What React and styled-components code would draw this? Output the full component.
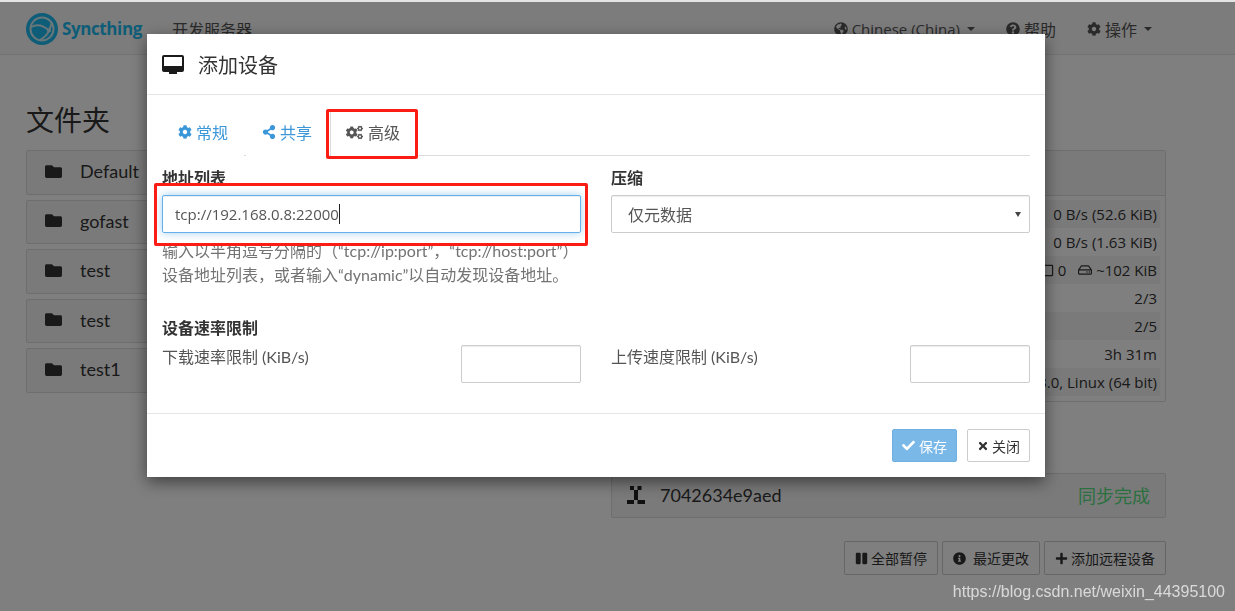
import React from 'react';
import styled, { createGlobalStyle } from 'styled-components';
import {
  FaCog,
  FaShareAlt,
  FaCogs,
  FaFolder,
  FaGlobeAmericas,
  FaQuestionCircle,
  FaCheck,
  FaTimes,
  FaPause,
  FaInfoCircle,
  FaPlus,
  FaRegHdd,
  FaRegSquare,
} from 'react-icons/fa';

const BASE_FONT = '"Open Sans", "Noto Sans CJK SC", sans-serif';
const NARROW_FONT = 'Lato, "Noto Sans CJK SC", sans-serif';

const GlobalStyle = createGlobalStyle`
  html, body {
    margin: 0;
    height: 100%;
    overflow: hidden;
    background: #fff;
    color: #333;
    font-family: ${BASE_FONT};
    font-size: 14px;
  }
  * { box-sizing: border-box; }
`;

const Navbar = styled.nav`
  align-items: center;
  background: #f8f8f8;
  border-bottom: 1px solid #e7e7e7;
  display: flex;
  height: 55px;
  padding: 3px 83px 0 26px;
`;

const Brand = styled.div`
  align-items: center;
  color: #1dbaf0;
  display: flex;
  font-family: "Open Sans", sans-serif;
  font-size: 17px;
  font-weight: 700;
  gap: 4px;
  letter-spacing: -0.4px;
  margin-right: 30px;
`;

const NavText = styled.span`
  color: #555;
  font-size: 16px;
`;

const NavRight = styled.div`
  align-items: center;
  display: flex;
  gap: 31px;
  margin-left: auto;
`;

const NavItem = styled.span`
  align-items: center;
  color: #555;
  display: flex;
  font-size: ${p => p.$size || 16}px;
  gap: 4px;
`;

const Caret = styled.span`
  border-left: 4px solid transparent;
  border-right: 4px solid transparent;
  border-top: 4px solid currentColor;
  display: inline-block;
  margin-left: 3px;
`;

const Content = styled.main`
  display: grid;
  gap: 15px;
  grid-template-columns: 570px 555px;
  padding: 0 26px;
`;

const Column = styled.section`
  display: flex;
  flex-direction: column;
`;

const Heading = styled.h1`
  color: #333;
  font-size: 28px;
  font-weight: 400;
  line-height: 40px;
  margin: 45px 0 10px;
`;

const FolderRow = styled.div`
  align-items: center;
  background: #f5f5f5;
  border: 1px solid #ddd;
  border-radius: 2px;
  color: #333;
  display: flex;
  font-family: Lato, sans-serif;
  font-size: 18px;
  gap: 18px;
  height: 44.5px;
  margin-bottom: 5px;
  padding: 0 0 2px 18px;
`;

const InfoPanel = styled.div`
  border: 1px solid #ddd;
  border-radius: 2px;
  height: 252px;
  margin-top: 95px;
`;

const InfoHeader = styled.div`
  background: #f5f5f5;
  border-bottom: 1px solid #ddd;
  height: 45px;
`;

const InfoBody = styled.div`
  padding: 4px 5px;
`;

const InfoRow = styled.div`
  align-items: center;
  background: ${p => (p.$striped ? '#f5f5f5' : '#fff')};
  display: flex;
  font-size: 15px;
  gap: 4px;
  height: 28px;
  justify-content: flex-end;
  padding-right: 3px;
`;

const DevicePanel = styled.div`
  align-items: center;
  background: #f5f5f5;
  border: 1px solid #ddd;
  border-radius: 2px;
  display: flex;
  font-family: Lato, sans-serif;
  font-size: 18px;
  gap: 15px;
  height: 45px;
  margin-top: 71px;
  padding: 0 15px 2px;
`;

const SyncStatus = styled.span`
  color: #56e080;
  font-family: ${BASE_FONT};
  font-size: 18px;
  margin-left: auto;
`;

const ActionRow = styled.div`
  display: flex;
  gap: 4px;
  justify-content: flex-end;
  margin-top: 23px;
`;

const PageButton = styled.div`
  align-items: center;
  background: #fff;
  border: 1px solid #ccc;
  border-radius: 2px;
  color: #333;
  display: flex;
  font-size: 14px;
  gap: ${p => p.$gap || 3}px;
  height: 34px;
  padding: 0 10px;
`;

const Backdrop = styled.div`
  background: rgba(0, 0, 0, 0.5);
  inset: 0;
  position: fixed;
`;

const ModalLayer = styled.div`
  inset: 0;
  padding: 34px 0 0 147px;
  position: fixed;
`;

const Modal = styled.div`
  background: #fff;
  box-shadow: 0 5px 15px rgba(0, 0, 0, 0.5);
  display: flex;
  flex-direction: column;
  height: 443px;
  width: 898px;
`;

const ModalHeader = styled.header`
  align-items: center;
  border-bottom: 1px solid #e5e5e5;
  color: #333;
  display: flex;
  font-size: 20px;
  gap: 14px;
  height: 61px;
  padding: 0 15px;
`;

const ModalBody = styled.div`
  flex: 1;
  padding: 15px 15px 0;
`;

const Tabs = styled.div`
  border-bottom: 1px solid #ddd;
  display: flex;
  gap: 2px;
  height: 46px;
`;

const Tab = styled.div`
  align-items: center;
  background: #fff;
  border: 1px solid ${p => (p.$active ? '#ddd' : 'transparent')};
  border-bottom: 0;
  color: ${p => (p.$active ? '#555' : '#3c97d9')};
  display: flex;
  font-size: 16px;
  gap: ${p => (p.$active ? 5 : 4)}px;
  height: 46px;
  justify-content: center;
  padding-bottom: 3px;
  position: relative;
  width: ${p => p.$width}px;
`;

const Highlight = styled.span`
  border: 3px solid #fb1c14;
  border-radius: 2px;
  height: ${p => p.$height || 'auto'};
  inset: ${p => p.$inset};
  pointer-events: none;
  position: absolute;
`;

const FormGrid = styled.div`
  display: grid;
  gap: 0 30px;
  grid-template-columns: 419px 419px;
`;

const Field = styled.div`
  padding-top: 10px;
  position: relative;
`;

const Label = styled.div`
  color: #333;
  font-size: 16px;
  font-weight: 700;
  line-height: 24px;
  margin-bottom: 5px;
`;

const TextBox = styled.div`
  align-items: center;
  border: 1px solid ${p => (p.$focus ? '#66afe9' : '#ccc')};
  border-radius: 2px;
  box-shadow: ${p =>
    p.$focus
      ? 'inset 0 1px 1px rgba(0,0,0,.075), 0 0 8px rgba(102,175,233,.6)'
      : 'inset 0 1px 1px rgba(0,0,0,.075)'};
  color: #555;
  display: flex;
  font-size: ${p => p.$size || 15}px;
  height: 38px;
  justify-content: space-between;
  padding: 0 12px 0 ${p => p.$indent || 12}px;
  width: ${p => p.$width || '100%'};
`;

const Cursor = styled.span`
  border-right: 1px solid #222;
  height: 20px;
`;

const Value = styled.span`
  align-items: center;
  display: flex;
`;

const SelectArrow = styled.span`
  border-left: 3px solid transparent;
  border-right: 3px solid transparent;
  border-top: 5px solid #444;
  margin-right: -4px;
`;

const Help = styled.p`
  color: #737373;
  font-family: ${NARROW_FONT};
  font-size: 16px;
  line-height: 24px;
  margin: 6px 0 0;
  white-space: nowrap;
`;

const RateSection = styled.div`
  margin-top: 29px;
`;

const RateLabel = styled.div`
  color: #333;
  font-size: 16px;
  font-weight: 700;
  line-height: 24px;
  margin-bottom: 5px;
`;

const RateRow = styled.div`
  align-items: flex-start;
  color: #555;
  display: flex;
  font-family: ${NARROW_FONT};
  font-size: 16px;
  justify-content: space-between;
  line-height: 24px;
`;

const ModalFooter = styled.footer`
  align-items: center;
  border-top: 1px solid #e5e5e5;
  display: flex;
  gap: 10px;
  height: 64px;
  justify-content: flex-end;
  padding: 0 15px;
`;

const FooterButton = styled.div`
  align-items: center;
  background: ${p => (p.$primary ? '#7ab8e8' : '#fff')};
  border: 1px solid ${p => (p.$primary ? '#6fb0e2' : '#ccc')};
  border-radius: 2px;
  color: ${p => (p.$primary ? '#fff' : '#333')};
  display: flex;
  font-size: 14px;
  gap: ${p => (p.$primary ? 4 : 3)}px;
  height: 33px;
  padding: 0 9px;
`;

const Watermark = styled.div`
  bottom: 10px;
  color: rgba(255, 255, 255, 0.7);
  font-family: "Liberation Sans", sans-serif;
  font-size: 16px;
  position: fixed;
  right: 10px;
`;

const TopEdge = styled.div`
  background: #e4e4e4;
  height: 2px;
  inset: 0 0 auto 0;
  position: fixed;
`;

const Logo = () => (
  <svg width="32" height="32" viewBox="0 0 32 32">
    <circle cx="16" cy="16" r="16" fill="#1dbaf0" />
    <circle cx="16" cy="16" r="11.5" fill="none" stroke="#cfeef5" strokeWidth="2" />
    <path
      d="M5 14 Q14 9 23 17.5 Q21 23 14 27 M23 17.5 Q25 13 26 9"
      fill="none"
      stroke="#cfeef5"
      strokeWidth="2"
    />
    <circle cx="23" cy="17.5" r="2" fill="#cfeef5" />
  </svg>
);

const DesktopIcon = () => (
  <svg width="22" height="19" viewBox="0 0 22 19">
    <path
      fillRule="evenodd"
      d="M2 0H20A2 2 0 0 1 22 2V15A2 2 0 0 1 20 17H2A2 2 0 0 1 0 15V2A2 2 0 0 1 2 0ZM2 2V11H20V2Z"
      fill="#1a1a1a"
    />
    <rect x="7" y="17" width="8" height="2" fill="#1a1a1a" />
  </svg>
);

const DeviceIcon = () => (
  <svg width="18" height="18" viewBox="0 0 18 18" fill="#222">
    <rect x="3" y="0" width="4" height="4" />
    <rect x="10.5" y="0" width="4" height="4" />
    <rect x="7" y="4" width="4" height="10" />
    <rect x="0" y="14" width="7" height="4" />
    <rect x="10.5" y="14" width="7.5" height="4" />
  </svg>
);

const folders = ['Default', 'gofast', 'test', 'test', 'test1'];

const App = () => (
  <>
    <GlobalStyle />
    <Navbar>
      <Brand>
        <Logo />
        Syncthing
      </Brand>
      <NavText>开发服务器</NavText>
      <NavRight>
        <NavItem $size={15}>
          <FaGlobeAmericas size={14} /> Chinese (China) <Caret />
        </NavItem>
        <NavItem>
          <FaQuestionCircle size={14} /> 帮助
        </NavItem>
        <NavItem>
          <FaCog size={14} /> 操作 <Caret />
        </NavItem>
      </NavRight>
    </Navbar>
    <Content>
      <Column>
        <Heading>文件夹</Heading>
        {folders.map((name, i) => (
          <FolderRow key={`${name}-${i}`}>
            <FaFolder size={17} />
            {name}
          </FolderRow>
        ))}
      </Column>
      <Column>
        <InfoPanel>
          <InfoHeader />
          <InfoBody>
            <InfoRow $striped>0 B/s (52.6 KiB)</InfoRow>
            <InfoRow>0 B/s (1.63 KiB)</InfoRow>
            <InfoRow $striped>
              <FaRegSquare size={13} /> 0 &nbsp; <FaRegHdd size={14} /> ~102 KiB
            </InfoRow>
            <InfoRow>2/3</InfoRow>
            <InfoRow $striped>2/5</InfoRow>
            <InfoRow>3h 31m</InfoRow>
            <InfoRow $striped>v1.3.0, Linux (64 bit)</InfoRow>
          </InfoBody>
        </InfoPanel>
        <DevicePanel>
          <DeviceIcon />
          7042634e9aed
          <SyncStatus>同步完成</SyncStatus>
        </DevicePanel>
        <ActionRow>
          <PageButton>
            <FaPause size={13} /> 全部暂停
          </PageButton>
          <PageButton $gap={7}>
            <FaInfoCircle size={13} /> 最近更改
          </PageButton>
          <PageButton>
            <FaPlus size={13} /> 添加远程设备
          </PageButton>
        </ActionRow>
      </Column>
    </Content>
    <Backdrop />
    <ModalLayer>
      <Modal>
        <ModalHeader>
          <DesktopIcon />
          添加设备
        </ModalHeader>
        <ModalBody>
          <Tabs>
            <Tab $width={82}>
              <FaCog size={14} /> 常规
            </Tab>
            <Tab $width={82}>
              <FaShareAlt size={14} /> 共享
            </Tab>
            <Tab $width={86} $active>
              <FaCogs size={17} /> 高级
              <Highlight $inset="-2px -3px -3px -5px" />
            </Tab>
          </Tabs>
          <FormGrid>
            <Field>
              <Label>地址列表</Label>
              <TextBox $focus>
                <Value>
                  tcp://192.168.0.8:22000
                  <Cursor />
                </Value>
              </TextBox>
              <Highlight $inset="27px -7px auto -8px" $height="63px" />
              <Help>
                输入以半角逗号分隔的（“tcp://ip:port”，“tcp://host:port”）
                <br />
                设备地址列表，或者输入“dynamic”以自动发现设备地址。
              </Help>
            </Field>
            <Field>
              <Label>压缩</Label>
              <TextBox $size={16} $indent={16}>
                仅元数据
                <SelectArrow />
              </TextBox>
            </Field>
          </FormGrid>
          <RateSection>
            <RateLabel>设备速率限制</RateLabel>
            <FormGrid>
              <RateRow>
                下载速率限制 (KiB/s)
                <TextBox $width="120px" />
              </RateRow>
              <RateRow>
                上传速度限制 (KiB/s)
                <TextBox $width="120px" />
              </RateRow>
            </FormGrid>
          </RateSection>
        </ModalBody>
        <ModalFooter>
          <FooterButton $primary>
            <FaCheck size={13} /> 保存
          </FooterButton>
          <FooterButton>
            <FaTimes size={12} /> 关闭
          </FooterButton>
        </ModalFooter>
      </Modal>
    </ModalLayer>
    <TopEdge />
    <Watermark>https://blog.csdn.net/weixin_44395100</Watermark>
  </>
);

export default App;
